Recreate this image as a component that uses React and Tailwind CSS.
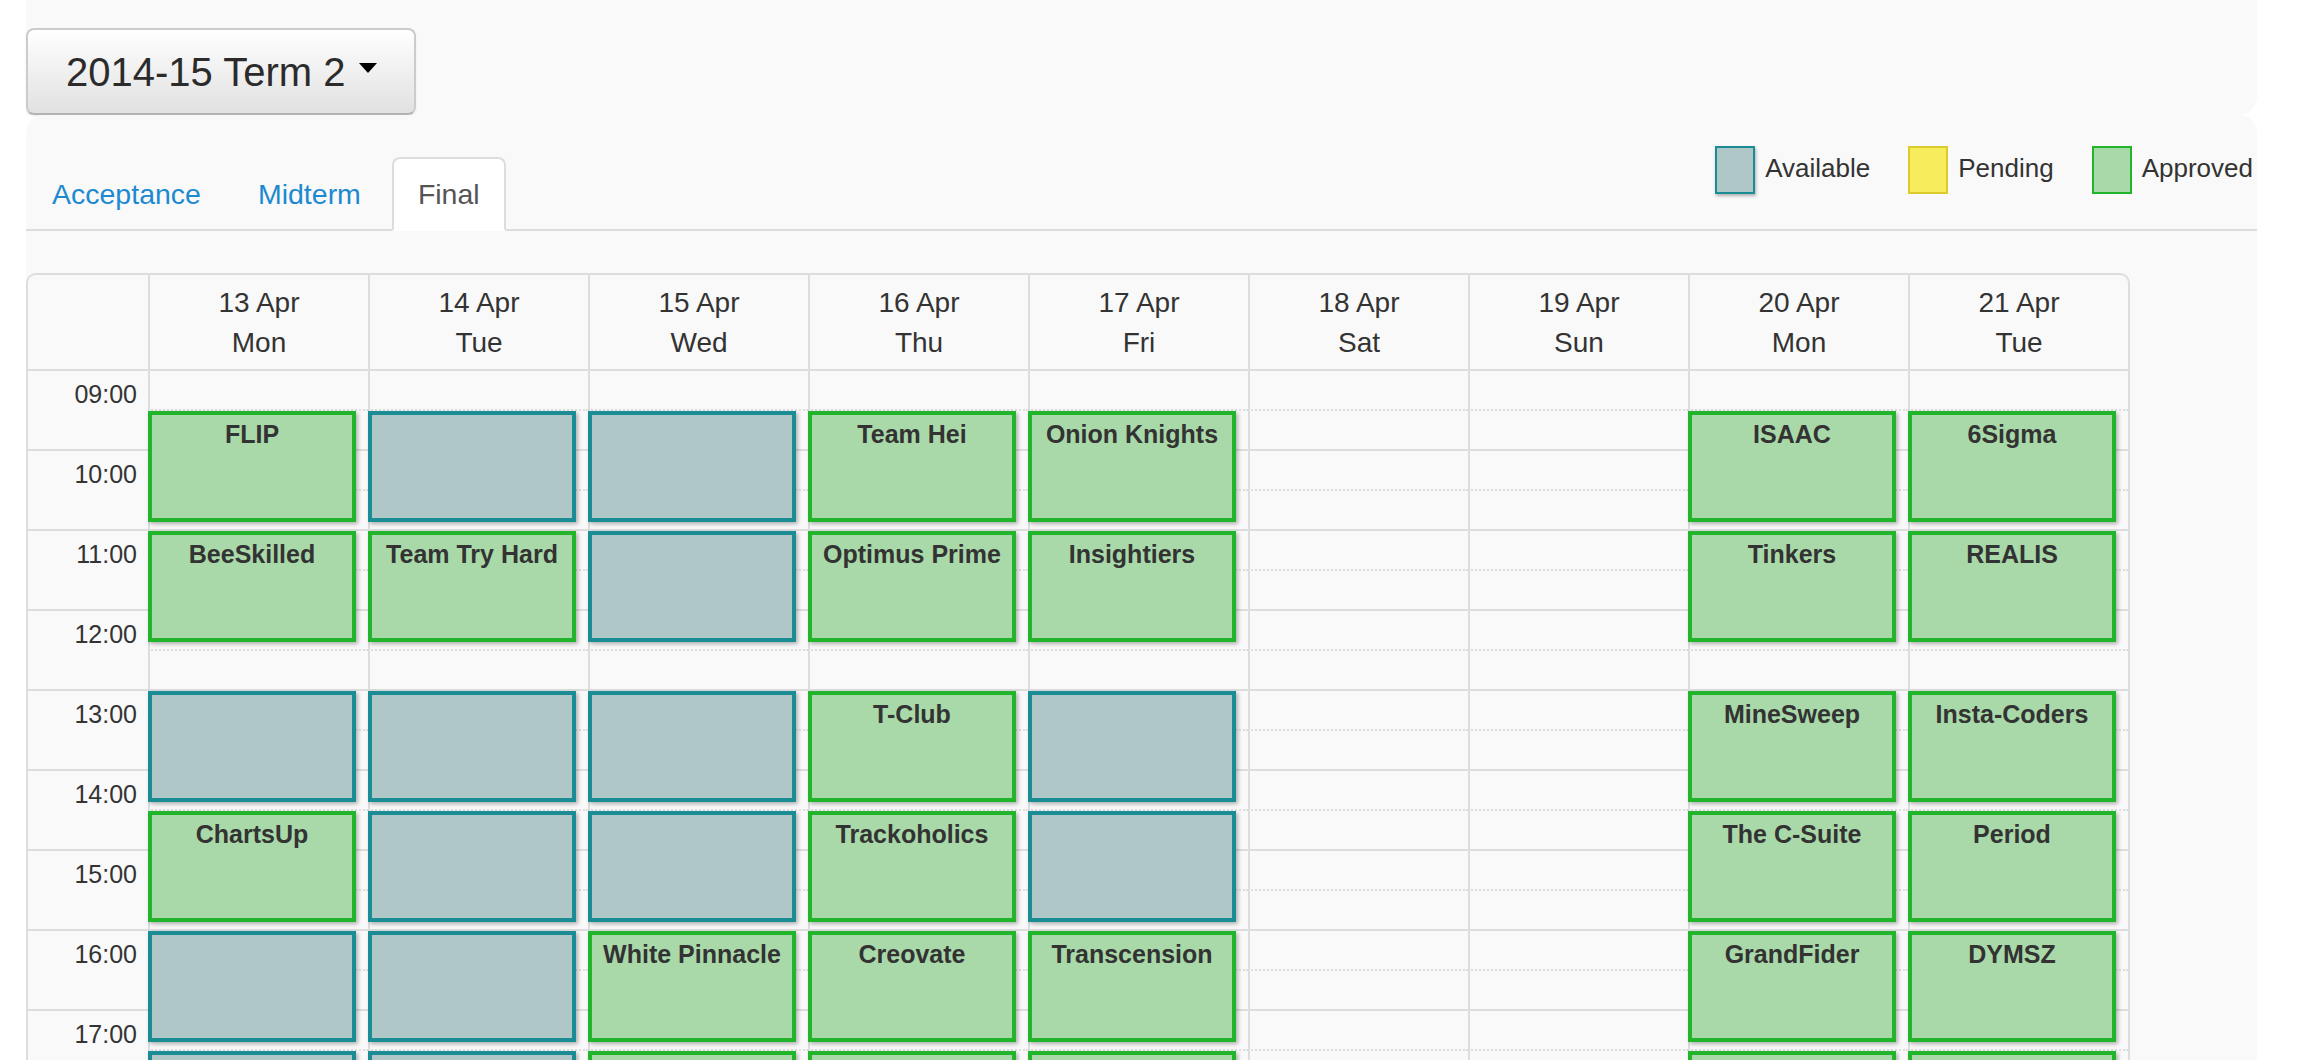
import React from 'react';

const ROW_START = [
  'row-start-1', 'row-start-2', 'row-start-3', 'row-start-4', 'row-start-5',
  'row-start-6', 'row-start-7', 'row-start-8', 'row-start-9', 'row-start-10',
  'row-start-11', 'row-start-12', 'row-start-13', 'row-start-14', 'row-start-15',
  'row-start-16', 'row-start-17', 'row-start-18', 'row-start-19', 'row-start-20',
];

const COL_START = [
  'col-start-2', 'col-start-3', 'col-start-4', 'col-start-5', 'col-start-6',
  'col-start-7', 'col-start-8', 'col-start-9', 'col-start-10',
];

// rows where a slot begins: 9:30, 11:00, 13:00, 14:30, 16:00, 17:30
const SLOT_ROWS = ['row-start-2', 'row-start-5', 'row-start-9', 'row-start-12', 'row-start-15', 'row-start-18'];

const HOURS = ['09:00', '10:00', '11:00', '12:00', '13:00', '14:00', '15:00', '16:00', '17:00'];

const STYLES = {
  g: 'bg-[#a9d9a9] border-[#22b52b]',
  a: 'bg-[#b0c7c8] border-[#1b8b94]',
};

const DAYS = [
  { date: '13 Apr', day: 'Mon', slots: [['FLIP', 'g'], ['BeeSkilled', 'g'], ['', 'a'], ['ChartsUp', 'g'], ['', 'a'], ['', 'a']] },
  { date: '14 Apr', day: 'Tue', slots: [['', 'a'], ['Team Try Hard', 'g'], ['', 'a'], ['', 'a'], ['', 'a'], ['', 'a']] },
  { date: '15 Apr', day: 'Wed', slots: [['', 'a'], ['', 'a'], ['', 'a'], ['', 'a'], ['White Pinnacle', 'g'], ['', 'g']] },
  { date: '16 Apr', day: 'Thu', slots: [['Team Hei', 'g'], ['Optimus Prime', 'g'], ['T-Club', 'g'], ['Trackoholics', 'g'], ['Creovate', 'g'], ['', 'g']] },
  { date: '17 Apr', day: 'Fri', slots: [['Onion Knights', 'g'], ['Insightiers', 'g'], ['', 'a'], ['', 'a'], ['Transcension', 'g'], ['', 'g']] },
  { date: '18 Apr', day: 'Sat', slots: [] },
  { date: '19 Apr', day: 'Sun', slots: [] },
  { date: '20 Apr', day: 'Mon', slots: [['ISAAC', 'g'], ['Tinkers', 'g'], ['MineSweep', 'g'], ['The C-Suite', 'g'], ['GrandFider', 'g'], ['', 'g']] },
  { date: '21 Apr', day: 'Tue', slots: [['6Sigma', 'g'], ['REALIS', 'g'], ['Insta-Coders', 'g'], ['Period', 'g'], ['DYMSZ', 'g'], ['', 'g']] },
];

const Legend = () => (
  <div className="flex items-center gap-[38px] mt-[31px] mr-[4px] text-[26px] leading-[30px] text-[#333]">
    <div className="flex items-center">
      <div className="w-[40px] h-[48px] border-2 border-[#1b8b94] bg-[#b0c7c8] shadow-[1px_2px_3px_rgba(0,0,0,0.3)]" />
      <span className="ml-[10px] -mt-[4px]">Available</span>
    </div>
    <div className="flex items-center">
      <div className="w-[40px] h-[48px] border-2 border-[#dccb2c] bg-[#f6ec5c]" />
      <span className="ml-[10px] -mt-[4px]">Pending</span>
    </div>
    <div className="flex items-center">
      <div className="w-[40px] h-[48px] border-2 border-[#22b52b] bg-[#a9d9a9]" />
      <span className="ml-[10px] -mt-[4px]">Approved</span>
    </div>
  </div>
);

const App = () => {
  return (
    <div className="w-[2306px] h-[1060px] overflow-hidden bg-white font-['Liberation_Sans',Arial,sans-serif] text-[#333]">
      <div className="ml-[26px] w-[2231px]">

        {/* Term picker */}
        <div className="h-[115px] pt-[28px] bg-[#f9f9f9] rounded-br-[18px]">
          <button className="h-[87px] w-[390px] flex items-center pl-[38px] border-2 border-[#cccccc] border-b-[#b3b3b3] rounded-[8px] bg-linear-to-b from-white to-[#e1e1e1] shadow-[0_1px_2px_rgba(0,0,0,0.08)] text-[40px] text-[#2b2b2b]">
            <span>2014-15 Term 2</span>
            <span className="ml-[14px] mb-[8px] w-0 h-0 border-l-[9px] border-r-[9px] border-t-[10px] border-l-transparent border-r-transparent border-t-black" />
          </button>
        </div>

        {/* Panel */}
        <div className="h-[945px] bg-[#f9f9f9] rounded-t-[18px]">

          {/* Tabs + legend */}
          <div className="flex justify-between items-start border-b-2 border-[#dddddd]">
            <ul className="flex items-end mt-[42px] -mb-[2px] text-[28.5px]">
              <li className="h-[74px] px-[24px] mr-[5px] flex items-center border-2 border-transparent rounded-t-[8px] text-[#1d89d0]">
                Acceptance
              </li>
              <li className="h-[74px] px-[24px] mr-[5px] flex items-center border-2 border-transparent rounded-t-[8px] text-[#1d89d0]">
                Midterm
              </li>
              <li className="h-[74px] px-[24px] flex items-center border-2 border-[#dddddd] border-b-white rounded-t-[8px] bg-white text-[#555]">
                Final
              </li>
            </ul>
            <Legend />
          </div>

          {/* Calendar */}
          <div className="mt-[42px] w-[2104px] border-2 border-b-0 border-[#dddddd] rounded-t-[10px]">

            {/* Header */}
            <div className="grid grid-cols-[120px_repeat(9,220px)] border-b-2 border-[#dddddd]">
              <div className="h-[94px]" />
              {DAYS.map((d) => (
                <div key={d.date} className="h-[94px] pt-[8px] border-l-2 border-[#dddddd] text-center text-[28px] leading-[40px]">
                  <div>{d.date}</div>
                  <div>{d.day}</div>
                </div>
              ))}
            </div>

            {/* Body */}
            <div className="grid grid-cols-[120px_repeat(9,220px)] grid-rows-[repeat(20,40px)]">
              {HOURS.map((h, i) => (
                <div
                  key={h}
                  className={`col-start-1 ${ROW_START[i * 2]} row-span-2 border-b-2 border-[#dddddd] text-right pr-[11px] pt-[8px] text-[25px] leading-[30px]`}
                >
                  {h}
                </div>
              ))}
              <div className="col-start-1 row-start-19 row-span-2 border-b-2 border-[#dddddd]" />

              {DAYS.map((d, di) =>
                ROW_START.map((rs, ri) => (
                  <div
                    key={`${di}-${ri}`}
                    className={`${COL_START[di]} ${rs} border-l-2 border-b-2 border-[#dddddd] ${ri % 2 === 0 ? '[border-bottom-style:dotted]' : ''}`}
                  />
                ))
              )}

              {DAYS.map((d, di) =>
                d.slots.map(([name, kind], si) => (
                  <div
                    key={`e-${di}-${si}`}
                    className={`${COL_START[di]} ${SLOT_ROWS[si]} row-span-3 self-start z-10 h-[111px] w-[208px] border-4 ${STYLES[kind]} shadow-[2px_2px_4px_rgba(0,0,0,0.3)] pt-[4px] text-center font-bold text-[25px] leading-[30px] whitespace-nowrap text-[#333]`}
                  >
                    {name}
                  </div>
                ))
              )}
            </div>
          </div>
        </div>
      </div>
    </div>
  );
};

export default App;
